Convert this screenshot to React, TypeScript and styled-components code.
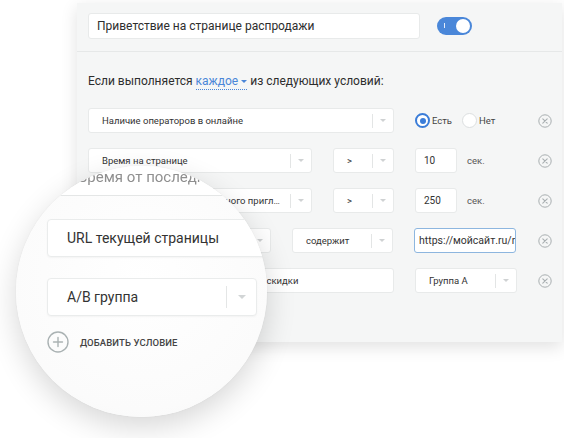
import * as React from 'react'
import styled, { createGlobalStyle } from 'styled-components'

const GlobalStyle = createGlobalStyle`
  html, body {
    margin: 0;
    background: #ffffff;
  }
  body {
    font-family: Roboto, "Noto Sans", "Liberation Sans", sans-serif;
    color: #333;
  }
`

const Page = styled.div`
  position: relative;
  width: 564px;
  height: 438px;
  overflow: hidden;
  box-sizing: border-box;
  padding: 3px 2px 0 77px;
`

const Panel = styled.div`
  width: 485px;
  height: 339px;
  background: #f5f6f6;
  box-shadow: 0 5px 16px rgba(0, 0, 0, 0.12);
`

const Header = styled.div`
  display: flex;
  align-items: center;
  gap: 17px;
  height: 49px;
  box-sizing: border-box;
  padding: 0 11px 3px;
  border-bottom: 1px solid #e6e8e8;
`

const TitleInput = styled.div`
  width: 332px;
  height: 26px;
  box-sizing: border-box;
  display: flex;
  align-items: center;
  padding-left: 8px;
  background: #fff;
  border: 1px solid #e8eaea;
  border-radius: 3px;
  font-size: 12px;
  color: #2d2d2d;
`

const Toggle = styled.div`
  width: 35px;
  height: 18px;
  border-radius: 9px;
  background: #4a87d9;
  display: flex;
  align-items: center;
  justify-content: space-between;
  padding: 0 2px 0 7px;
  box-sizing: border-box;
`

const ToggleMark = styled.span`
  width: 1px;
  height: 5px;
  background: rgba(255, 255, 255, 0.85);
`

const Knob = styled.span`
  width: 14px;
  height: 14px;
  border-radius: 50%;
  background: #fff;
`

const Body = styled.div`
  padding: 21px 10px 0 11px;
`

const Rule = styled.div`
  font-size: 12px;
  line-height: 16px;
  color: #2d2d2d;
  margin-bottom: 19px;
`

const Mode = styled.span`
  color: #4a86d8;
  border-bottom: 1px dotted #4a86d8;
  padding-bottom: 1px;
`

const ModeArrow = styled.span`
  display: inline-block;
  margin-left: 3px;
  vertical-align: middle;
  border-left: 3px solid transparent;
  border-right: 3px solid transparent;
  border-top: 3px solid #4a86d8;
`

const Rows = styled.div`
  display: flex;
  flex-direction: column;
  gap: 15px;
`

const Row = styled.div`
  display: flex;
  align-items: center;
  gap: 21px;
  height: 25px;
`

const Box = styled.div<{ $w: number; $focus?: boolean }>`
  width: ${p => p.$w}px;
  height: 25px;
  flex: none;
  box-sizing: border-box;
  display: flex;
  align-items: center;
  background: #fff;
  border: 1px solid ${p => (p.$focus ? '#8db6df' : '#e8eaea')};
  border-radius: 3px;
  overflow: hidden;
  white-space: nowrap;
`

const Label = styled.span<{ $pad?: number; $size?: number; $clip?: boolean }>`
  flex: 1;
  min-width: 0;
  padding-left: ${p => p.$pad ?? 13}px;
  padding-right: ${p => (p.$clip ? 0 : 6)}px;
  font-size: ${p => p.$size ?? 9.5}px;
  color: #333;
  overflow: hidden;
  text-overflow: ${p => (p.$clip ? 'clip' : 'ellipsis')};
`

const Divider = styled.span`
  width: 1px;
  height: 14px;
  flex: none;
  background: #e3e5e5;
`

const Caret = styled.span`
  width: 20px;
  flex: none;
  display: flex;
  justify-content: center;
  &::after {
    content: '';
    border-left: 3px solid transparent;
    border-right: 3px solid transparent;
    border-top: 3px solid #cfd2d3;
  }
`

const Unit = styled.span`
  font-size: 9.5px;
  color: #555;
  margin-left: -11px;
`

const Radios = styled.div`
  display: flex;
  align-items: center;
  gap: 10px;
`

const RadioItem = styled.label`
  display: flex;
  align-items: center;
  gap: 2px;
  font-size: 9.5px;
  color: #444;
`

const RadioDot = styled.span<{ $on?: boolean }>`
  width: 15px;
  height: 15px;
  box-sizing: border-box;
  border-radius: 50%;
  background: #fff;
  border: ${p => (p.$on ? '2.5px solid #3b7dd8' : '1.5px solid #dcdfe0')};
  display: flex;
  align-items: center;
  justify-content: center;
  &::after {
    content: '';
    width: 6px;
    height: 6px;
    border-radius: 50%;
    background: ${p => (p.$on ? '#3b7dd8' : 'transparent')};
  }
`

const Remove = styled.span`
  margin-left: auto;
  width: 14px;
  height: 14px;
  display: flex;
`

const Magnifier = styled.div`
  position: absolute;
  left: 16px;
  top: 166px;
  width: 251px;
  height: 251px;
  border-radius: 50%;
  overflow: hidden;
  background: radial-gradient(circle at 50% 45%, #ffffff 0%, #fbfbfb 70%, #f3f4f4 100%);
  box-shadow: 0 10px 30px rgba(0, 0, 0, 0.16), 0 0 2px rgba(0, 0, 0, 0.06);
`

const MagContent = styled.div`
  display: flex;
  flex-direction: column;
  margin-top: -8px;
  padding-left: 31px;
`

const MagBox = styled.div<{ $w: number; $faded?: boolean; $gap?: number }>`
  width: ${p => p.$w}px;
  height: 38px;
  margin-bottom: ${p => p.$gap ?? 21}px;
  box-sizing: border-box;
  display: flex;
  align-items: center;
  background: #fff;
  border: 1px solid ${p => (p.$faded ? '#e4e6e6' : '#eaecec')};
  border-radius: 4px;
  white-space: nowrap;
  font-size: ${p => (p.$faded ? 15 : 14)}px;
  color: ${p => (p.$faded ? '#8f8f8f' : '#333')};
  box-shadow: ${p => (p.$faded ? 'none' : '0 1px 2px rgba(0,0,0,0.04)')};
`

const MagLabel = styled.span<{ $faded?: boolean }>`
  flex: 1;
  padding-left: ${p => (p.$faded ? 30 : 19)}px;
  ${p => (p.$faded ? 'mask-image: linear-gradient(90deg, #000 55%, transparent 90%);' : '')}
`

const MagDivider = styled.span`
  width: 1px;
  height: 22px;
  background: #e4e6e6;
`

const MagCaret = styled.span`
  width: 29px;
  display: flex;
  justify-content: center;
  &::after {
    content: '';
    border-left: 4px solid transparent;
    border-right: 4px solid transparent;
    border-top: 4px solid #d2d5d6;
  }
`

const AddRow = styled.div`
  display: flex;
  align-items: center;
  gap: 11px;
  margin-top: -1px;
  font-size: 9.5px;
  font-weight: 500;
  color: #444;
  letter-spacing: 0.1px;
`

const CloseIcon = () => (
  <svg width="14" height="14" viewBox="0 0 14 14">
    <circle cx="7" cy="7" r="6.2" fill="none" stroke="#a9afb1" strokeWidth="1" />
    <path d="M4.8 4.8 L9.2 9.2 M9.2 4.8 L4.8 9.2" stroke="#a9afb1" strokeWidth="1.1" strokeLinecap="round" />
  </svg>
)

const PlusIcon = () => (
  <svg width="22" height="22" viewBox="0 0 22 22">
    <circle cx="11" cy="11" r="10" fill="none" stroke="#aab2b3" strokeWidth="1.4" />
    <path d="M11 6.5 V15.5 M6.5 11 H15.5" stroke="#aab2b3" strokeWidth="1.4" strokeLinecap="round" />
  </svg>
)

const Select = ({ w, text }: { w: number; text: string }) => (
  <Box $w={w}>
    <Label>{text}</Label>
    <Divider />
    <Caret />
  </Box>
)

const App = () => {
  return (
    <Page>
      <GlobalStyle />
      <Panel>
        <Header>
          <TitleInput>Приветствие на странице распродажи</TitleInput>
          <Toggle>
            <ToggleMark />
            <Knob />
          </Toggle>
        </Header>
        <Body>
          <Rule>
            Если выполняется <Mode>каждое<ModeArrow /></Mode> из следующих условий:
          </Rule>
          <Rows>
            <Row>
              <Select w={306} text="Наличие операторов в онлайне" />
              <Radios>
                <RadioItem><RadioDot $on />Есть</RadioItem>
                <RadioItem><RadioDot />Нет</RadioItem>
              </Radios>
              <Remove><CloseIcon /></Remove>
            </Row>
            <Row>
              <Select w={224} text="Время на странице" />
              <Select w={61} text=">" />
              <Box $w={42}><Label $pad={8} $size={10}>10</Label></Box>
              <Unit>сек.</Unit>
              <Remove><CloseIcon /></Remove>
            </Row>
            <Row>
              <Select w={224} text="Время от последнего активного приглашения" />
              <Select w={61} text=">" />
              <Box $w={42}><Label $pad={8} $size={10}>250</Label></Box>
              <Unit>сек.</Unit>
              <Remove><CloseIcon /></Remove>
            </Row>
            <Row>
              <Select w={183} text="URL текущей страницы" />
              <Select w={101} text="содержит" />
              <Box $w={102} $focus><Label $pad={4} $size={10.5} $clip>https://мойсайт.ru/rasprodazha</Label></Box>
              <Remove><CloseIcon /></Remove>
            </Row>
            <Row>
              <Select w={105} text="A/B группа" />
              <Box $w={180}><Label $pad={12}>Вариант скидки</Label></Box>
              <Select w={102} text="Группа А" />
              <Remove><CloseIcon /></Remove>
            </Row>
          </Rows>
        </Body>
      </Panel>

      <Magnifier>
        <MagContent>
          <MagBox $w={260} $faded $gap={23}>
            <MagLabel $faded>Время от последнего приглашения</MagLabel>
          </MagBox>
          <MagBox $w={260}>
            <MagLabel>URL текущей страницы</MagLabel>
          </MagBox>
          <MagBox $w={210} $gap={16}>
            <MagLabel>A/B группа</MagLabel>
            <MagDivider />
            <MagCaret />
          </MagBox>
          <AddRow>
            <PlusIcon />
            ДОБАВИТЬ УСЛОВИЕ
          </AddRow>
        </MagContent>
      </Magnifier>
    </Page>
  )
}

export default App
